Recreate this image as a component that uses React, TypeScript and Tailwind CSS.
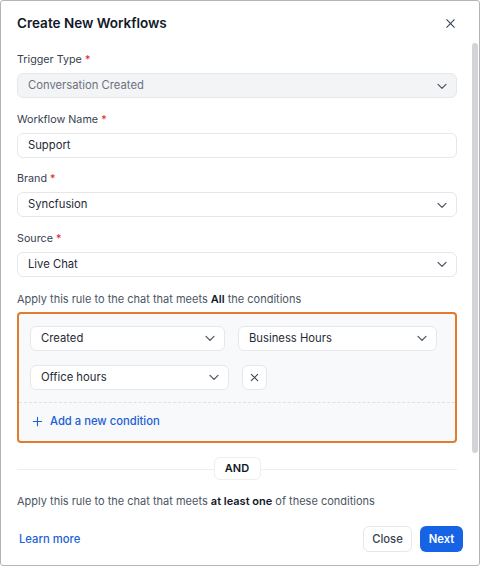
import React from "react";

const Chevron = () => (
  <svg width="16" height="16" viewBox="0 0 24 24" fill="none" stroke="#4b5563" strokeWidth="1.9" strokeLinecap="round" strokeLinejoin="round">
    <path d="M6 9.5l6 6 6-6" />
  </svg>
);

const XIcon = ({ size = 12, color = "#374151", w = 2 }: { size?: number; color?: string; w?: number }) => (
  <svg width={size} height={size} viewBox="0 0 24 24" fill="none" stroke={color} strokeWidth={w} strokeLinecap="round">
    <path d="M5 5l14 14M19 5L5 19" />
  </svg>
);

const Label = ({ children }: { children: React.ReactNode }) => (
  <div className="text-[10.75px] leading-[14px] text-[#374151] mb-[6px]">
    {children} <span className="text-[#dc2626]">*</span>
  </div>
);

const Select = ({ value, disabled, chevron = true, className = "" }: { value: string; disabled?: boolean; chevron?: boolean; className?: string }) => (
  <div
    className={`h-[25px] flex items-center justify-between rounded-[6px] border border-[#e5e7eb] pl-[10px] pr-[6px] text-[11.25px] ${
      disabled ? "bg-[#f3f4f6] text-[#6b7280]" : "bg-white text-[#1f2937]"
    } ${className}`}
  >
    <span>{value}</span>
    {chevron && <Chevron />}
  </div>
);

export default function App() {
  return (
    <div className="w-[480px] h-[566px] bg-white border border-[#b4b4b8] rounded-[3px] flex flex-col overflow-hidden relative" style={{ fontFamily: "Inter, 'Noto Sans', sans-serif" }}>
      <div className="h-[42px] shrink-0 flex items-center justify-between pl-[16px] pr-[22px] pt-[2px]">
        <div className="text-[13.5px] font-semibold text-[#111827]">Create New Workflows</div>
        <XIcon size={13} color="#374151" w={2} />
      </div>
      <div className="flex-1 overflow-hidden relative">
        <div className="absolute right-[1px] top-0 w-[6px] h-[410px] rounded-full bg-[#d4d4d8]" />
        <div className="pl-[16px] pr-[22px] pt-[10px]">
          <Label>Trigger Type</Label>
          <Select value="Conversation Created" disabled />
          <div className="h-[14.5px]" />
          <Label>Workflow Name</Label>
          <Select value="Support" chevron={false} />
          <div className="h-[14.5px]" />
          <Label>Brand</Label>
          <Select value="Syncfusion" />
          <div className="h-[14.5px]" />
          <Label>Source</Label>
          <Select value="Live Chat" />
          <div className="mt-[15px] text-[11px] leading-[14px] text-[#4b5563]">
            Apply this rule to the chat that meets <span className="font-semibold text-[#111827]">All</span> the conditions
          </div>
          <div className="mt-[6px] border-2 border-[#e07b2f] rounded-[4px] bg-[#f8f9fb]">
            <div className="px-[11px] pt-[12px] pb-[12px] flex flex-col gap-[14px]">
              <div className="flex gap-[13px]">
                <Select value="Created" className="w-[195px]" />
                <Select value="Business Hours" className="w-[199px]" />
              </div>
              <div className="flex gap-[13px]">
                <Select value="Office hours" className="w-[199px]" />
                <div className="w-[25px] h-[25px] rounded-[6px] border border-[#e5e7eb] bg-white flex items-center justify-center">
                  <XIcon size={11} color="#374151" w={2.2} />
                </div>
              </div>
            </div>
            <div className="border-t border-dashed border-[#dde1e7]" />
            <div className="h-[38px] flex items-center pl-[13px] gap-[7px] text-[#1a5fd6] text-[11.25px] font-medium">
              <svg width="11" height="11" viewBox="0 0 24 24" fill="none" stroke="#1a5fd6" strokeWidth="2.4" strokeLinecap="round">
                <path d="M12 3v18M3 12h18" />
              </svg>
              <span>Add a new condition</span>
            </div>
          </div>
          <div className="relative mt-[14px] h-[23px] flex items-center justify-center">
            <div className="absolute left-0 right-0 top-[12px] border-t border-[#eceef1]" />
            <div className="relative bg-white border border-[#eceef1] rounded-[6px] w-[47px] h-[23px] flex items-center justify-center text-[11px] font-semibold text-[#111827]">
              AND
            </div>
          </div>
          <div className="mt-[14px] text-[11px] leading-[14px] text-[#4b5563]">
            Apply this rule to the chat that meets <span className="font-semibold text-[#111827]">at least one</span> of these conditions
          </div>
        </div>
      </div>
      <div className="h-[52px] shrink-0 flex items-center justify-between pl-[18px] pr-[16px]">
        <div className="text-[11.25px] font-medium text-[#1a5fd6]">Learn more</div>
        <div className="flex gap-[8px]">
          <div className="h-[26px] w-[49px] justify-center rounded-[6px] border border-[#e5e7eb] bg-white flex items-center text-[11.25px] font-medium text-[#374151]">Close</div>
          <div className="h-[26px] w-[43px] justify-center rounded-[6px] bg-[#1763e6] flex items-center text-[11.25px] font-semibold text-white">Next</div>
        </div>
      </div>
    </div>
  );
}
